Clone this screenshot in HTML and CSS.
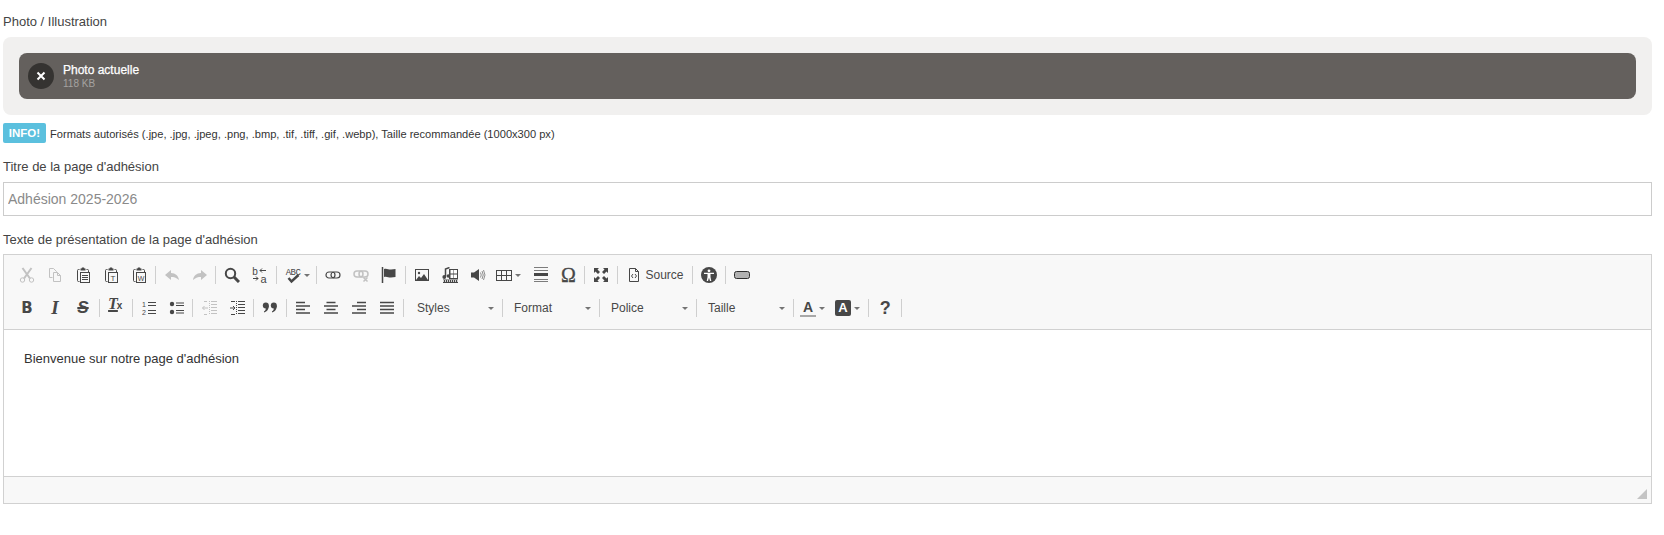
FILE: index.html
```html
<!DOCTYPE html>
<html lang="fr">
<head>
<meta charset="utf-8">
<title>Adhésion</title>
<link rel="stylesheet" href="styles.css">
</head>
<body>
<svg class="sprite" width="0" height="0" aria-hidden="true">
  <symbol id="i-cut" viewBox="0 0 16 16"><circle cx="3.5" cy="13" r="2.2" class="s"/><circle cx="12.5" cy="13" r="2.2" class="s"/><path d="M5 11.5 12.5 1M11 11.5 3.5 1" class="s w2"/></symbol>
  <symbol id="i-copy" viewBox="0 0 16 16"><path d="M5.5 10.5h-3v-9h4l3 3v1M6.5 5.5h4l3 3v6h-7zM10.5 5.5v3h3" class="s"/></symbol>
  <symbol id="i-clip" viewBox="0 0 16 16"><path d="M4.5 2.5h-1a1 1 0 0 0-1 1v10a1 1 0 0 0 1 1h1M11.5 2.5h1a1 1 0 0 1 1 1v2" class="s"/><path d="M5.5 3.5v-2h1l.5-1h2l.5 1h1v2z" class="f"/><rect x="5.5" y="5.5" width="9" height="10" class="s"/></symbol>
  <symbol id="i-paste" viewBox="0 0 16 16"><use href="#i-clip"/><path d="M7 8.500h6M7 10.500h6M7 12.500h6" class="s"/></symbol>
  <symbol id="i-undo" viewBox="0 0 16 16"><path d="M7 3 1 8l6 5v-3c3 0 5 .5 8 3-.5-4-3.500-7-8-7z" class="f"/></symbol>
  <symbol id="i-redo" viewBox="0 0 16 16"><path d="M9 3l6 5-6 5v-3c-3 0-5 .5-8 3 .5-4 3.500-7 8-7z" class="f"/></symbol>
  <symbol id="i-find" viewBox="0 0 16 16"><circle cx="6.500" cy="6.500" r="4.700" class="s w2"/><path d="M10 10l5 5" class="s w3"/></symbol>
  <symbol id="i-link" viewBox="0 0 16 16"><rect x="1" y="5" width="9" height="6" rx="3" class="s w12"/><rect x="6" y="5" width="9" height="6" rx="3" class="s w12"/></symbol>
  <symbol id="i-unlink" viewBox="0 0 16 16"><rect x="1" y="4" width="9" height="6" rx="3" class="s w15"/><rect x="6" y="4" width="9" height="6" rx="3" class="s w15"/><path d="M10.500 10.500l4 4M14.500 10.500l-4 4" class="s w15"/></symbol>
  <symbol id="i-flag" viewBox="0 0 16 16"><path d="M1.500 0v16" class="s w15"/><path d="M3 2c3-1 5 1 7 .5l4.500-.5v8L10 10.500c-2 .5-4-1.500-7-.5z" class="f"/></symbol>
  <symbol id="i-image" viewBox="0 0 16 16"><rect x="1.500" y="2.500" width="13" height="11" class="s"/><path d="M2 13l3-4 2 2 3-4 4 6z" class="f"/><circle cx="5" cy="6" r="1.200" class="f"/></symbol>
  <symbol id="i-flash" viewBox="0 0 16 16"><rect x="7" y="2" width="9" height="10" class="f"/><rect x="8.500" y="3" width="3" height="3.500" class="w"/><rect x="12" y="3" width="3" height="3.500" class="w"/><rect x="8.500" y="7.500" width="3" height="3.500" class="w"/><rect x="12" y="7.500" width="3" height="3.500" class="w"/><rect x="1" y="12.500" width="15" height="3.500" class="f"/><path d="M1 14h15" class="dash"/><path d="M3.500 9.500V2l4-1.500" class="s w15"/><circle cx="2.300" cy="10" r="1.900" class="f"/><circle cx="6.300" cy="9" r="1.700" class="f"/></symbol>
  <symbol id="i-audio" viewBox="0 0 16 16"><path d="M1 5.500h3L9 2v12L4 10.500H1z" class="f"/><path d="M10.500 5.500q1.500 2.500 0 5M12 4q2.500 4 0 8M13.500 3q3 5 0 10" class="s thin"/></symbol>
  <symbol id="i-table" viewBox="0 0 16 16"><rect x=".5" y="3.500" width="15" height="10" class="s"/><path d="M.5 8.500h15M5.500 3.500v10M10.500 3.500v10" class="s"/></symbol>
  <symbol id="i-hr" viewBox="0 0 16 16"><path d="M1 .5h14M1 3.500h14M1 12.500h14M1 14.500h14" class="s lite"/><path d="M1 7.500h14" class="s w3"/></symbol>
  <symbol id="i-max" viewBox="0 0 16 16"><path d="M1 1h5L4.500 2.500 7 5 5 7 2.500 4.500 1 6zM15 1v5l-1.500-1.500L11 7 9 5l2.500-2.500L10 1zM1 15v-5l1.500 1.500L5 9l2 2-2.500 2.500L6 15zM15 15h-5l1.500-1.500L9 11l2-2 2.500 2.500L15 10z" class="f"/></symbol>
  <symbol id="i-source" viewBox="0 0 16 16"><path d="M3.500 1.500h6l3 3v10h-9zM9.500 1.500v3h3" class="s"/><path d="M7 7 5.500 9 7 11M9 7l1.500 2L9 11" class="s"/></symbol>
  <symbol id="i-a11y" viewBox="0 0 16 16"><circle cx="8" cy="8" r="8" class="f"/><circle cx="8" cy="3.800" r="1.400" class="w"/><path d="M3 5.700h10v1.400H9.500V10l.8 4H9L8 10.800 7 14H5.700l.8-4V7.100H3z" class="w"/></symbol>
  <symbol id="i-button" viewBox="0 0 16 16"><rect x=".5" y="4.500" width="15" height="7" rx="2" class="btnshape"/></symbol>
  <symbol id="i-ul" viewBox="0 0 16 16"><circle cx="3" cy="4" r="2.200" class="f"/><circle cx="3" cy="12" r="2.200" class="f"/><path d="M7 3h8M7 5.500h8M7 10.500h8M7 13h8" class="s"/></symbol>
  <symbol id="i-outdent" viewBox="0 0 16 16"><path d="M8.500 1v14" class="s dots"/><path d="M7 8H1.500M3.500 6l-2 2 2 2" class="s"/><path d="M3 1.500h3M3 14.500h3M10 1.500h6M10 4.500h6M10 7.500h6M10 10.500h6M10 13.500h6" class="s"/></symbol>
  <symbol id="i-indent" viewBox="0 0 16 16"><path d="M7.500 1v14" class="s dots"/><path d="M1 8h5M4 6l2 2-2 2" class="s"/><path d="M2 1.500h4M2 14.500h4M9 1.500h7M9 4.500h7M9 7.500h7M9 10.500h7M9 13.500h7" class="s"/></symbol>
  <symbol id="i-quote" viewBox="0 0 16 16"><circle cx="3.800" cy="5.500" r="3" class="f"/><path d="M6.800 5.500c0 4-2 6-4.500 7l-.4-1c1.500-.800 2-2 2-4z" class="f"/><circle cx="11.800" cy="5.500" r="3" class="f"/><path d="M14.800 5.500c0 4-2 6-4.500 7l-.4-1c1.500-.800 2-2 2-4z" class="f"/></symbol>
  <symbol id="i-left" viewBox="0 0 16 16"><path d="M1 2.500h9M1 6h14M1 9.500h9M1 13h14" class="s w15"/></symbol>
  <symbol id="i-center" viewBox="0 0 16 16"><path d="M3.500 2.500h9M1 6h14M3.500 9.500h9M1 13h14" class="s w15"/></symbol>
  <symbol id="i-right" viewBox="0 0 16 16"><path d="M6 2.500h9M1 6h14M6 9.500h9M1 13h14" class="s w15"/></symbol>
  <symbol id="i-block" viewBox="0 0 16 16"><path d="M1 2.500h14M1 6h14M1 9.500h14M1 13h14" class="s w15"/></symbol>
</svg>

<main class="form">
  <label class="label first">Photo / Illustration</label>
  <div class="panel">
    <div class="item">
      <button class="remove" type="button" aria-label="Supprimer">
        <svg width="10" height="10" viewBox="0 0 10 10"><path d="M1.500 1.500l7 7M8.500 1.500l-7 7" class="x"/></svg>
      </button>
      <div class="meta">
        <span class="name">Photo actuelle</span>
        <span class="size">118 KB</span>
      </div>
    </div>
  </div>
  <p class="hint"><span class="badge">INFO!</span><span class="hint-text">Formats autorisés (.jpe, .jpg, .jpeg, .png, .bmp, .tif, .tiff, .gif, .webp), Taille recommandée (1000x300 px)</span></p>

  <label class="label title">Titre de la page d'adhésion</label>
  <input class="input" type="text" placeholder="Adhésion 2025-2026">

  <label class="label last">Texte de présentation de la page d'adhésion</label>
  <div class="editor">
    <div class="toolbar">
      <div class="row top">
        <span class="b off"><svg><use href="#i-cut"/></svg></span>
        <span class="b off"><svg><use href="#i-copy"/></svg></span>
        <span class="b"><svg><use href="#i-paste"/></svg></span>
        <span class="b"><svg viewBox="0 0 16 16"><use href="#i-clip"/><text x="10" y="13.500" class="t t8">T</text></svg></span>
        <span class="b"><svg viewBox="0 0 16 16"><use href="#i-clip"/><text x="10" y="13.500" class="t t7">W</text></svg></span>
        <i class="sep"></i>
        <span class="b off"><svg><use href="#i-undo"/></svg></span>
        <span class="b off"><svg><use href="#i-redo"/></svg></span>
        <i class="sep"></i>
        <span class="b"><svg><use href="#i-find"/></svg></span>
        <span class="b"><svg viewBox="0 0 16 16"><text x="3" y="7.500" class="t t9">b</text><text x="11.500" y="15.500" class="t t11">a</text><path d="M8 3.500h6M10 1.500l-2 2 2 2M1 11.500h5M4 9.500l2 2-2 2" class="s"/></svg></span>
        <i class="sep"></i>
        <span class="b drop spell"><svg viewBox="0 0 16 16"><text x="8" y="7.500" class="t t85">ABC</text><path d="M3.500 11l3 3.500L13.500 8" class="s w25"/></svg><i class="arrow"></i></span>
        <i class="sep"></i>
        <span class="b"><svg><use href="#i-link"/></svg></span>
        <span class="b off"><svg><use href="#i-unlink"/></svg></span>
        <span class="b"><svg><use href="#i-flag"/></svg></span>
        <i class="sep"></i>
        <span class="b"><svg><use href="#i-image"/></svg></span>
        <span class="b"><svg><use href="#i-flash"/></svg></span>
        <span class="b"><svg><use href="#i-audio"/></svg></span>
        <span class="b drop tbl"><svg><use href="#i-table"/></svg><i class="arrow"></i></span>
        <span class="b"><svg><use href="#i-hr"/></svg></span>
        <span class="b omega">Ω</span>
        <i class="sep"></i>
        <span class="b"><svg><use href="#i-max"/></svg></span>
        <i class="sep"></i>
        <span class="b src"><svg><use href="#i-source"/></svg><span class="src-text">Source</span></span>
        <i class="sep"></i>
        <span class="b"><svg><use href="#i-a11y"/></svg></span>
        <i class="sep"></i>
        <span class="b"><svg><use href="#i-button"/></svg></span>
      </div>
      <div class="row">
        <span class="b glyph bold">B</span>
        <span class="b glyph ital">I</span>
        <span class="b glyph strike">S</span>
        <i class="sep"></i>
        <span class="b glyph clear"><span class="clear-t">T</span><span class="clear-x">x</span></span>
        <i class="sep"></i>
        <span class="b"><svg viewBox="0 0 16 16"><text x="3" y="7" class="t t7">1</text><text x="3" y="15" class="t t7">2</text><path d="M7 2.500h8M7 5.500h8M7 10.500h8M7 13.500h8" class="s"/></svg></span>
        <span class="b"><svg><use href="#i-ul"/></svg></span>
        <i class="sep"></i>
        <span class="b off"><svg><use href="#i-outdent"/></svg></span>
        <span class="b"><svg><use href="#i-indent"/></svg></span>
        <i class="sep"></i>
        <span class="b"><svg><use href="#i-quote"/></svg></span>
        <i class="sep"></i>
        <span class="b"><svg><use href="#i-left"/></svg></span>
        <span class="b"><svg><use href="#i-center"/></svg></span>
        <span class="b"><svg><use href="#i-right"/></svg></span>
        <span class="b"><svg><use href="#i-block"/></svg></span>
        <i class="sep"></i>
        <span class="combo first-combo">Styles<i class="arrow"></i></span>
        <i class="sep"></i>
        <span class="combo">Format<i class="arrow"></i></span>
        <i class="sep"></i>
        <span class="combo">Police<i class="arrow"></i></span>
        <i class="sep"></i>
        <span class="combo">Taille<i class="arrow"></i></span>
        <i class="sep"></i>
        <span class="b drop color"><span class="a-fg">A</span><i class="arrow"></i></span>
        <span class="b drop color bgc"><span class="a-bg">A</span><i class="arrow"></i></span>
        <i class="sep"></i>
        <span class="b glyph help">?</span>
        <i class="sep"></i>
      </div>
    </div>
    <div class="content">Bienvenue sur notre page d'adhésion</div>
    <div class="status"><i class="grip"></i></div>
  </div>
</main>
</body>
</html>
```
FILE: styles.css
```css
* { box-sizing: border-box; }
html, body { margin: 0; padding: 0; background: #fff; }
body { font-family: "Liberation Sans", Arial, sans-serif; color: #333; font-size: 13px; }
.sprite { position: absolute; }

.form { display: flex; flex-direction: column; padding: 13px 12px 0 3px; }
.label { display: block; font-size: 13px; line-height: 18px; height: 18px; color: #444; margin-top: 16px; margin-bottom: 5px; }
.label.first { margin-top: 0; margin-bottom: 6px; }
.label.title { margin-top: 15px; margin-bottom: 6px; }
.label.last { margin-top: 15px; }

.panel { height: 78px; background: #f1f0ef; border-radius: 8px; padding: 16px 15px; }
.item { height: 46px; margin: 0 1px 0 1px; background: #64605d; border-radius: 8px; display: flex; align-items: center; padding-left: 9px; color: #fff; }
.remove { width: 26px; height: 26px; border: 0; padding: 0; border-radius: 50%; background: #353331; display: flex; align-items: center; justify-content: center; }
.x { fill: none; stroke: #fff; stroke-width: 2; }
.meta { display: flex; flex-direction: column; margin-left: 9px; padding-top: 1px; }
.name { font-size: 12px; line-height: 15px; font-weight: 400; -webkit-text-stroke: 0.25px #fff; }
.size { font-size: 10px; line-height: 12px; color: #a5a3a1; }

.hint { margin: 8px 0 0; height: 20px; display: flex; align-items: center; font-size: 11.100px; color: #333; }
.hint-text { padding-top: 1px; }
.badge { width: 43px; height: 20px; background: #5bc0de; color: #fff; font-weight: 700; font-size: 11.500px; border-radius: 2px; display: flex; align-items: center; justify-content: center; margin-right: 4px; }

.input { display: block; width: 100%; height: 34px; border: 1px solid #ccc; padding: 0 4px; font: 14px "Liberation Sans", Arial, sans-serif; color: #555; background: #fff; outline: 0; }
.input::placeholder { color: #8a8a8a; opacity: 1; }

.editor { height: 250px; border: 1px solid #d1d1d1; display: flex; flex-direction: column; }
.toolbar { height: 75px; flex: none; background: #f8f8f8; border-bottom: 1px solid #d1d1d1; padding: 4px 0 0 9px; }
.row { display: flex; height: 32px; align-items: center; }
.row.top { margin-bottom: 1px; }

.b { position: relative; flex: none; width: 28px; height: 24px; display: flex; align-items: center; justify-content: center; color: #474747; }
.b > svg { width: 16px; height: 16px; display: block; flex: none; overflow: visible; }
.b.off { opacity: .3; }
.b.drop { justify-content: flex-start; padding-left: 6px; }
.spell { width: 36px; }
.tbl { width: 35px; padding-left: 4px !important; }
.arrow { display: block; flex: none; width: 0; height: 0; margin-left: 3px; border: 3px solid transparent; border-top-color: #747474; border-bottom-width: 0; }

.s { fill: none; stroke: currentColor; stroke-width: 1; }
.w12 { stroke-width: 1.200; }
.w15 { stroke-width: 1.500; }
.w2 { stroke-width: 2; }
.w25 { stroke-width: 2.500; }
.w3 { stroke-width: 3; }
.thin { stroke-width: .8; opacity: .75; }
.lite { opacity: .7; }
.dots { stroke-dasharray: 1 1; }
.dash { stroke: #fff; stroke-width: 1.500; stroke-dasharray: 1 1; fill: none; }
.f { fill: currentColor; }
.w { fill: #fff; }
.btnshape { fill: #b1b1b1; stroke: #2f2f2f; stroke-width: 1; }
.t { fill: currentColor; stroke: none; text-anchor: middle; font-family: "Liberation Sans", sans-serif; }
.t7 { font-size: 7px; }
.t8 { font-size: 8px; }
.t85 { font-size: 9px; font-family: "Liberation Mono", monospace; letter-spacing: -.5px; }
.t9 { font-size: 10px; }
.t11 { font-size: 11px; }

.sep { flex: none; display: block; width: 1px; height: 18px; background: #cfcfcf; margin: 0 2px 0 1.750px; }
.top .sep { margin-left: 1.500px; }

.glyph { font-size: 16px; line-height: 16px; }
.bold { font-family: "DejaVu Sans", sans-serif; font-weight: 700; font-size: 15px; }
.ital { font-family: "Liberation Serif", serif; font-weight: 700; font-style: italic; font-size: 19px; }
.strike { font-family: "Liberation Sans", sans-serif; font-weight: 700; font-style: italic; font-size: 17px; text-decoration: line-through; text-decoration-thickness: 2px; }
.clear { font-family: "Liberation Serif", serif; align-items: baseline; padding-right: 1px; }
.clear-t { font-weight: 700; font-style: italic; font-size: 16px; line-height: 16px; text-decoration: underline; text-decoration-thickness: 2px; }
.clear-x { font-family: "Liberation Sans", sans-serif; font-weight: 700; font-size: 10px; line-height: 10px; margin-left: -1px; }
.omega { font-family: "Liberation Serif", serif; font-size: 20px; line-height: 16px; font-weight: 400; -webkit-text-stroke: .3px #474747; }
.help { font-family: "Liberation Sans", sans-serif; font-weight: 700; font-size: 18px; }

.src { width: 71px; justify-content: flex-start; padding-left: 6px; }
.src-text { font-size: 12px; line-height: 16px; margin-left: 4px; color: #484848; }

.combo { flex: none; width: 92.250px; height: 24px; display: flex; align-items: center; justify-content: space-between; padding: 0 6px 0 9px; font-size: 12px; color: #484848; }
.combo .arrow { margin: 0; }
.first-combo { margin-left: 2.500px; }

.color { width: 33px; padding-left: 4px !important; }
.bgc { width: 37.500px; padding-left: 6px !important; }
.a-fg { display: block; width: 16px; height: 17px; font-weight: 700; font-size: 14px; line-height: 14px; text-align: center; border-bottom: 2px solid #a8a8a8; color: #474747; }
.a-bg { display: block; width: 16px; height: 16px; font-weight: 700; font-size: 13px; line-height: 16px; text-align: center; background: #474747; color: #fff; border-radius: 2px; }

.content { flex: 1; background: #fff; padding: 21px 20px; font-size: 13px; line-height: 16px; color: #333; }
.status { height: 27px; flex: none; position: relative; background: #f8f8f8; border-top: 1px solid #d1d1d1; }
.grip { position: absolute; right: 4px; bottom: 4px; width: 0; height: 0; border-style: solid; border-width: 0 0 10px 10px; border-color: transparent transparent #c4c4c4 transparent; }
```
